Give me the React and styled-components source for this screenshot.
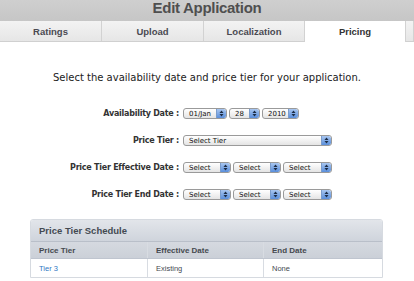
import React from 'react';
import styled, { createGlobalStyle } from 'styled-components';

const GlobalStyle = createGlobalStyle`
    html, body {
        margin: 0;
        padding: 0;
        background: #ffffff;
        font-family: "DejaVu Sans", "Liberation Sans", sans-serif;
    }
`;

const Page = styled.div`
    width: 414px;
    height: 281px;
    overflow: hidden;
    background: #ffffff;
`;

const TitleBar = styled.div`
    height: 21px;
    background: linear-gradient(#cfcfcf, #c6c6c6);
    color: #4f4f4f;
    font-family: "Liberation Sans", Arial, sans-serif;
    font-weight: bold;
    font-size: 15px;
    line-height: 15px;
    text-align: center;
    overflow: hidden;
    letter-spacing: -0.3px;
`;

const Tabs = styled.div`
    display: grid;
    grid-template-columns: 102px 102px 101px 101px 1fr;
    height: 21px;
    background: linear-gradient(#f3f3f3, #e6e6e6);
    border-bottom: 1px solid #d0d0d0;
    box-sizing: border-box;
`;

const Tab = styled.div`
    display: flex;
    align-items: center;
    justify-content: center;
    font-family: "Liberation Sans", Arial, sans-serif;
    font-size: 9.5px;
    font-weight: bold;
    color: ${p => (p.active ? '#333' : '#4a4a52')};
    background: ${p => (p.active ? '#ffffff' : 'transparent')};
    border-right: 1px solid #d2d2d2;
    margin-bottom: ${p => (p.active ? '-1px' : '0')};
`;

const Intro = styled.p`
    margin: 30px 0 0;
    text-align: center;
    font-size: 10px;
    color: #222;
`;

const Form = styled.div`
    display: grid;
    grid-template-columns: 179px auto;
    column-gap: 4px;
    row-gap: 16px;
    margin-top: 25px;
    align-items: center;
`;

const Label = styled.div`
    text-align: right;
    font-size: 8px;
    letter-spacing: -0.25px;
    font-weight: bold;
    color: #333;
`;

const Controls = styled.div`
    display: flex;
    gap: 2px;
`;

const Select = styled.div`
    display: flex;
    align-items: center;
    justify-content: space-between;
    width: ${p => p.w}px;
    height: 11px;
    box-sizing: border-box;
    border: 1px solid #9a9a9a;
    border-radius: 3px;
    background: linear-gradient(#ffffff, #e4e4e4);
    font-size: 7px;
    color: #111;
    padding-left: 5px;
    overflow: hidden;
`;

const Arrows = styled.span`
    display: flex;
    align-items: center;
    justify-content: center;
    width: 9px;
    height: 100%;
    background: linear-gradient(#a8c6f0, #5a8fdc);
    border-left: 1px solid #7a9ccc;
    border-radius: 0 2px 2px 0;
`;

const Schedule = styled.div`
    margin: 19px 0 0 30px;
    width: 351px;
    border: 1px solid #d6dae0;
    border-radius: 3px 3px 0 0;
    overflow: hidden;
    font-family: "Liberation Sans", Arial, sans-serif;
`;

const ScheduleTitle = styled.div`
    height: 22px;
    display: flex;
    align-items: center;
    padding-left: 8px;
    background: linear-gradient(#e2e5ea, #cfd4dc);
    border-bottom: 1px solid #b9bfc9;
    box-sizing: border-box;
    font-size: 9.5px;
    font-weight: bold;
    color: #444a52;
`;

const Row = styled.div`
    display: grid;
    grid-template-columns: 117px 116px 1fr;
    height: ${p => (p.head ? 17 : 18)}px;
    background: ${p => (p.head ? 'linear-gradient(#d5d9e0, #cbd0d8)' : '#ffffff')};
    border-bottom: ${p => (p.head ? '1px solid #bfc5cf' : 'none')};
    box-sizing: border-box;
`;

const Cell = styled.div`
    display: flex;
    align-items: center;
    padding-left: 8px;
    font-size: ${p => (p.head ? '8px' : '7.5px')};
    font-weight: ${p => (p.head ? 'bold' : 'normal')};
    color: ${p => (p.link ? '#2f78c4' : '#45494f')};
    border-right: 1px solid #d8dce2;
    &:last-child {
        border-right: none;
    }
`;

function Arrow() {
    return (
        <Arrows>
            <svg width="5" height="7" viewBox="0 0 5 7">
                <path d="M0.5 3 L2.5 0.5 L4.5 3 Z" fill="#1b2b44" />
                <path d="M0.5 4 L2.5 6.5 L4.5 4 Z" fill="#1b2b44" />
            </svg>
        </Arrows>
    );
}

function FakeSelect({ w, children }) {
    return (
        <Select w={w}>
            <span>{children}</span>
            <Arrow />
        </Select>
    );
}

const tabs = ['Ratings', 'Upload', 'Localization', 'Pricing'];

export default function App() {
    return (
        <Page>
            <GlobalStyle />
            <TitleBar>Edit Application</TitleBar>
            <Tabs>
                {tabs.map(t => (
                    <Tab key={t} active={t === 'Pricing'}>{t}</Tab>
                ))}
                <Tab />
            </Tabs>
            <Intro>Select the availability date and price tier for your application.</Intro>
            <Form>
                <Label>Availability Date :</Label>
                <Controls>
                    <FakeSelect w={44}>01/Jan</FakeSelect>
                    <FakeSelect w={31}>28</FakeSelect>
                    <FakeSelect w={37}>2010</FakeSelect>
                </Controls>
                <Label>Price Tier :</Label>
                <Controls>
                    <FakeSelect w={149}>Select Tier</FakeSelect>
                </Controls>
                <Label>Price Tier Effective Date :</Label>
                <Controls>
                    <FakeSelect w={48}>Select</FakeSelect>
                    <FakeSelect w={48}>Select</FakeSelect>
                    <FakeSelect w={49}>Select</FakeSelect>
                </Controls>
                <Label>Price Tier End Date :</Label>
                <Controls>
                    <FakeSelect w={48}>Select</FakeSelect>
                    <FakeSelect w={48}>Select</FakeSelect>
                    <FakeSelect w={49}>Select</FakeSelect>
                </Controls>
            </Form>
            <Schedule>
                <ScheduleTitle>Price Tier Schedule</ScheduleTitle>
                <Row head>
                    <Cell head>Price Tier</Cell>
                    <Cell head>Effective Date</Cell>
                    <Cell head>End Date</Cell>
                </Row>
                <Row>
                    <Cell link>Tier 3</Cell>
                    <Cell>Existing</Cell>
                    <Cell>None</Cell>
                </Row>
            </Schedule>
        </Page>
    );
}
